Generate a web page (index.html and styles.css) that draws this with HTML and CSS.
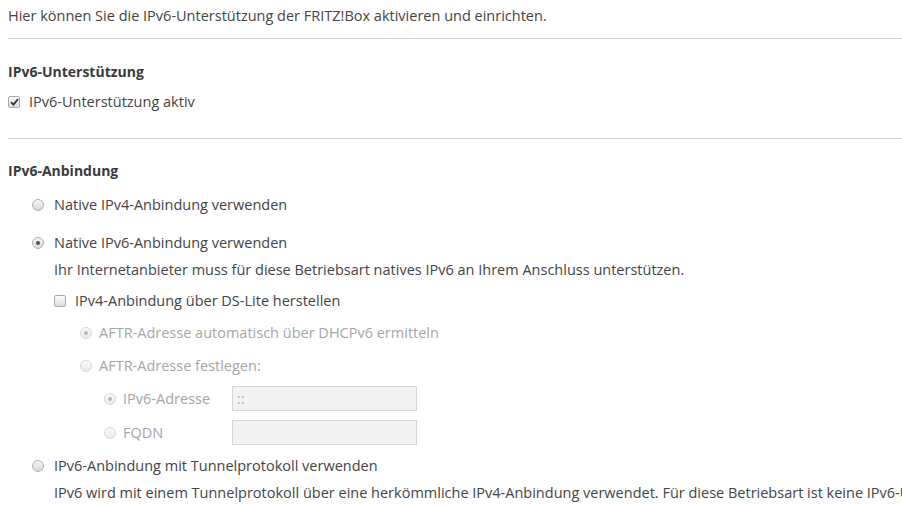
FILE: index.html
```html
<!DOCTYPE html>
<html lang="de">
<head>
<meta charset="UTF-8">
<title>IPv6</title>
<link rel="stylesheet" href="styles.css">
</head>
<body>
<div id="page">
  <p class="intro">Hier können Sie die IPv6-Unterstützung der FRITZ!Box aktivieren und einrichten.</p>
  <hr class="sep">

  <h4 class="head first">IPv6-Unterstützung</h4>
  <label class="opt lvl0 row-active">
    <span class="box on"><svg width="9" height="8" viewBox="0 0 9 8"><path d="M1 4.2 L3.4 6.6 L8 1.2" fill="none" stroke="#333" stroke-width="1.8"/></svg></span>
    IPv6-Unterstützung aktiv
  </label>
  <hr class="sep sep2">

  <h4 class="head">IPv6-Anbindung</h4>
  <label class="opt lvl1 r1"><span class="radio"></span>Native IPv4-Anbindung verwenden</label>
  <label class="opt lvl1 r2"><span class="radio on"></span>Native IPv6-Anbindung verwenden</label>
  <p class="desc lvl2">Ihr Internetanbieter muss für diese Betriebsart natives IPv6 an Ihrem Anschluss unterstützen.</p>
  <label class="opt lvl2 r3"><span class="box"></span>IPv4-Anbindung über DS-Lite herstellen</label>
  <label class="opt lvl3 r4 off"><span class="radio on"></span>AFTR-Adresse automatisch über DHCPv6 ermitteln</label>
  <label class="opt lvl3 r4b off"><span class="radio"></span>AFTR-Adresse festlegen:</label>
  <div class="opt lvl4 r5 off">
    <span class="radio on"></span><span class="lbl">IPv6-Adresse</span>
    <input type="text" class="field" value="::" disabled>
  </div>
  <div class="opt lvl4 r6 off">
    <span class="radio"></span><span class="lbl">FQDN</span>
    <input type="text" class="field" value="" disabled>
  </div>
  <label class="opt lvl1 r7"><span class="radio"></span>IPv6-Anbindung mit Tunnelprotokoll verwenden</label>
  <p class="desc lvl1t">IPv6 wird mit einem Tunnelprotokoll über eine herkömmliche IPv4-Anbindung verwendet. Für diese Betriebsart ist keine IPv6-Unterstützung durch Ihren Internetanbieter erforderlich.</p>
</div>
</body>
</html>
```

FILE: styles.css
```css
* {
	margin: 0;
	padding: 0;
	box-sizing: border-box;
}

html, body {
	overflow: hidden;
	background: #fff;
}

body {
	font-family: "Source Sans Pro", "Open Sans", "Liberation Sans", sans-serif;
	font-size: 14.5px;
	line-height: 20px;
	color: #444;
}

#page {
	width: 1300px;
	padding: 6px 8px 0 8px;
}

.intro {
	white-space: nowrap;
}

.sep {
	border: none;
	border-top: 1px solid #d0d0d0;
	margin-top: 12px;
	width: 1200px;
}

.sep2 {
	margin-top: 26px;
}

.head {
	font-size: 14px;
	font-weight: bold;
	color: #3a3a3a;
	margin-top: 22px;
}

.head.first {
	margin-top: 23px;
}

.opt {
	display: flex;
	align-items: center;
	white-space: nowrap;
	height: 20px;
}

.row-active {
	margin-top: 10px;
}

.lvl1 { padding-left: 24px; }
.lvl2 { padding-left: 46px; }
.lvl3 { padding-left: 72px; }
.lvl4 { padding-left: 96px; }
.lvl1t { padding-left: 46px; }

.r1 { margin-top: 14px; }
.r2 { margin-top: 18px; }
.r3 { margin-top: 11px; }
.r4 { margin-top: 12px; }
.r4b { margin-top: 13px; }
.r5 { margin-top: 10px; height: 25px; }
.r6 { margin-top: 9px; height: 25px; }
.r7 { margin-top: 11px; }

.desc {
	white-space: nowrap;
	margin-top: 7px;
}

.off {
	color: #a6a6a6;
}

.box {
	display: inline-flex;
	align-items: center;
	justify-content: center;
	width: 12px;
	height: 12px;
	margin-right: 9px;
	border: 1px solid #a9a9a9;
	border-radius: 2px;
	background: linear-gradient(#fcfcfc, #dedede);
	flex-shrink: 0;
}

.radio {
	display: inline-block;
	position: relative;
	width: 12px;
	height: 12px;
	margin-right: 10px;
	border: 1px solid #b0b0b0;
	border-radius: 50%;
	background: linear-gradient(#f4f4f4, #d9d9d9);
	flex-shrink: 0;
}

.radio.on::after {
	content: "";
	position: absolute;
	left: 3px;
	top: 3px;
	width: 4px;
	height: 4px;
	border-radius: 50%;
	background: #505050;
}

.off .radio {
	margin-right: 7px;
	border-color: #d8d8d8;
	background: linear-gradient(#fafafa, #ececec);
}

.off .radio.on::after {
	background: #b4b4b4;
}

.lbl {
	width: 109px;
}

.field {
	width: 185px;
	height: 25px;
	border: 1px solid #d6d6d6;
	background: #f3f3f1;
	font-family: inherit;
	font-size: 14px;
	color: #b0b0b0;
	padding: 0 4px;
}
```
